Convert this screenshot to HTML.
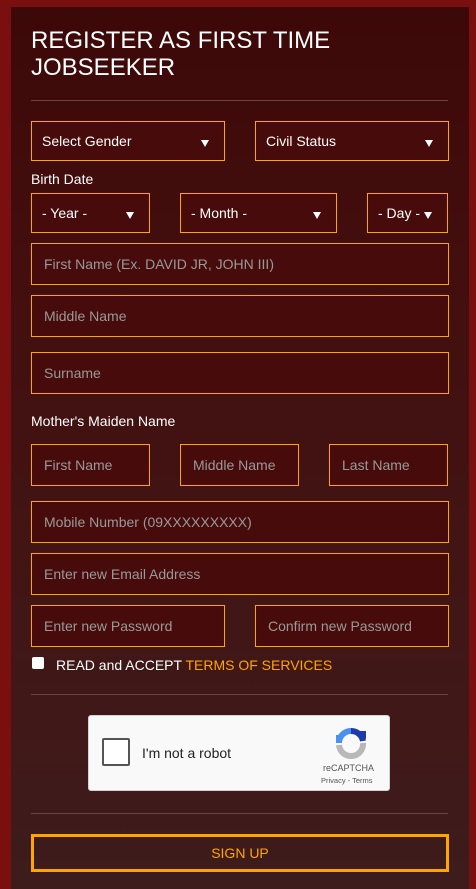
<!DOCTYPE html>
<html><head><meta charset="utf-8"><style>
*{box-sizing:border-box;margin:0;padding:0}
body{width:476px;height:889px;overflow:hidden;background:#7a0f0f;font-family:"Liberation Sans",Arial,sans-serif;position:relative}
.panel{position:absolute;left:11px;top:7px;width:458px;height:882px;background:linear-gradient(180deg,#3d0808 0%,#430e0e 30%,#421414 60%,#3e1c1c 100%)}
.a{position:absolute}
.f{position:absolute;border:1px solid #ffa500;background:#470b0b;color:#999;font-size:14px;padding-left:12px;display:flex;align-items:center}
.s{color:#fff;padding-left:10px}
.s::after{content:"";position:absolute;right:15px;top:18px;border-left:4px solid transparent;border-right:4px solid transparent;border-top:7px solid #fff}
.hr{position:absolute;left:31px;width:417px;height:1px;background:#6a4444}
.lbl{position:absolute;color:#fff;font-size:14px}
</style></head><body>
<div class="panel"></div>
<div class="a" style="left:31px;top:27px;color:#fff;font-size:24px;line-height:27px">REGISTER AS FIRST TIME<br>JOBSEEKER</div>
<div class="hr" style="top:100px"></div>
<div class="f s" style="left:31px;top:121px;width:194px;height:40px">Select Gender</div>
<div class="f s" style="left:255px;top:121px;width:194px;height:40px">Civil Status</div>
<div class="lbl" style="left:31px;top:171px">Birth Date</div>
<div class="f s" style="left:31px;top:193px;width:119px;height:40px">- Year -</div>
<div class="f s" style="left:180px;top:193px;width:157px;height:40px">- Month -</div>
<div class="f s" style="left:367px;top:193px;width:81px;height:40px">- Day -</div>
<div class="f" style="left:31px;top:243px;width:418px;height:42px">First Name (Ex. DAVID JR, JOHN III)</div>
<div class="f" style="left:31px;top:295px;width:418px;height:42px">Middle Name</div>
<div class="f" style="left:31px;top:352px;width:418px;height:42px">Surname</div>
<div class="lbl" style="left:31px;top:413px">Mother's Maiden Name</div>
<div class="f" style="left:31px;top:444px;width:119px;height:42px">First Name</div>
<div class="f" style="left:180px;top:444px;width:119px;height:42px">Middle Name</div>
<div class="f" style="left:329px;top:444px;width:119px;height:42px">Last Name</div>
<div class="f" style="left:31px;top:501px;width:418px;height:42px">Mobile Number (09XXXXXXXXX)</div>
<div class="f" style="left:31px;top:553px;width:418px;height:42px">Enter new Email Address</div>
<div class="f" style="left:31px;top:605px;width:194px;height:42px">Enter new Password</div>
<div class="f" style="left:255px;top:605px;width:194px;height:42px">Confirm new Password</div>
<div class="a" style="left:32px;top:657px;width:12px;height:12px;background:#fff;border-radius:2px"></div>
<div class="lbl" style="left:56px;top:657px">READ and ACCEPT <span style="color:#ffa500">TERMS OF SERVICES</span></div>
<div class="hr" style="top:694px"></div>
<div class="a" style="left:88px;top:715px;width:302px;height:76px;background:#f9f9f9;border:1px solid #d3d3d3;border-radius:3px">
 <div class="a" style="left:13px;top:22px;width:28px;height:28px;border:2px solid #555;border-radius:2px;background:#fff"></div>
 <div class="a" style="left:53px;top:29px;font-size:14px;color:#222">I'm not a robot</div>
 <svg class="a" style="left:246px;top:11px" width="32" height="32" viewBox="0 0 32 32">
  <path d="M16 4 A12 12 0 0 1 28 14" stroke="#1c3aa9" stroke-width="6" fill="none"/>
  <path d="M4 16 A12 12 0 0 1 16 4" stroke="#4a90f0" stroke-width="6" fill="none"/>
  <path d="M28 16 A12 12 0 0 1 4 18" stroke="#b8b8b8" stroke-width="6" fill="none"/>
  <path d="M24 4 L31 4 L31 12 Z" fill="#1c3aa9"/><path d="M1 8 L8 8 L1 16 Z" fill="#4a90f0"/>
 </svg>
 <div class="a" style="left:234px;top:47px;font-size:9px;color:#555">reCAPTCHA</div>
 <div class="a" style="left:232px;top:60px;font-size:7.5px;color:#555">Privacy - Terms</div>
</div>
<div class="hr" style="top:813px"></div>
<div class="a" style="left:31px;top:834px;width:418px;height:38px;border:3px solid #ffa500;color:#ffa500;font-size:14px;display:flex;align-items:center;justify-content:center">SIGN UP</div>
</body></html>
